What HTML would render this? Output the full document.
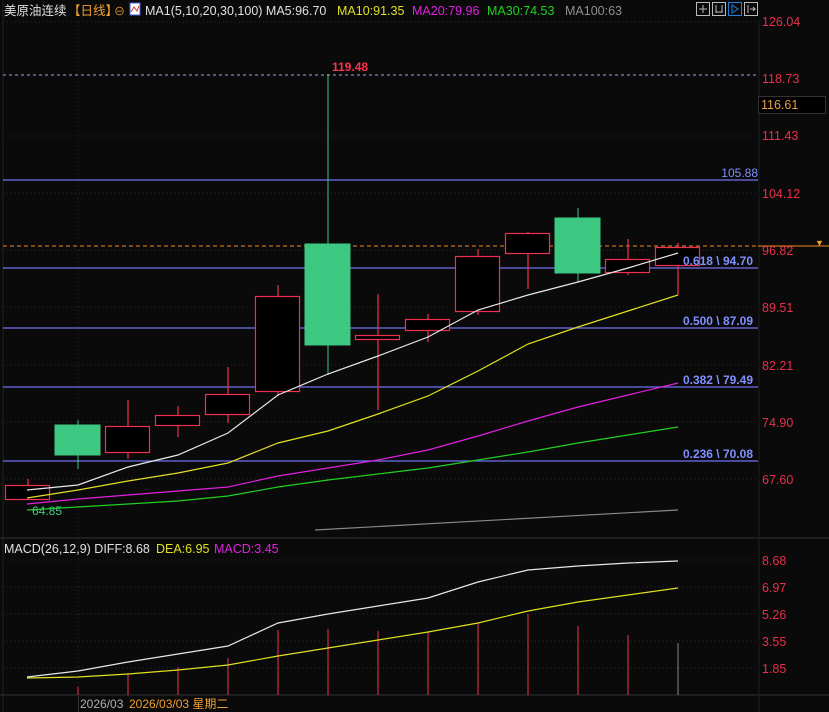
<!DOCTYPE html><html><head><meta charset="utf-8"><style>
body{margin:0;background:#0a0a0a;width:829px;height:712px;overflow:hidden;font-family:"Liberation Sans","Noto Sans CJK SC",sans-serif}
svg{display:block}
</style></head><body>
<svg width="829" height="712" xmlns="http://www.w3.org/2000/svg" font-family="Liberation Sans, Noto Sans CJK SC, sans-serif">
<rect width="829" height="712" fill="#0a0a0a"/>
<g stroke="#2a2a2a" stroke-dasharray="1,3">
<line x1="3" y1="22" x2="758" y2="22"/><line x1="3" y1="136" x2="758" y2="136"/><line x1="3" y1="193" x2="758" y2="193"/><line x1="3" y1="250" x2="758" y2="250"/><line x1="3" y1="307" x2="758" y2="307"/><line x1="3" y1="365" x2="758" y2="365"/><line x1="3" y1="422" x2="758" y2="422"/><line x1="3" y1="479" x2="758" y2="479"/>
<line x1="3" y1="560" x2="758" y2="560"/><line x1="3" y1="587" x2="758" y2="587"/><line x1="3" y1="614" x2="758" y2="614"/><line x1="3" y1="641" x2="758" y2="641"/><line x1="3" y1="668" x2="758" y2="668"/>
<line x1="78" y1="22" x2="78" y2="695"/>
</g>
<line x1="3" y1="0" x2="3" y2="712" stroke="#222"/>
<line x1="0" y1="538" x2="829" y2="538" stroke="#333"/>
<line x1="0" y1="695" x2="829" y2="695" stroke="#333"/>
<line x1="759" y1="20" x2="759" y2="712" stroke="#1e1e1e"/>
<g stroke="#7070f0" stroke-width="1.2">
<line x1="3" y1="180" x2="758" y2="180"/><line x1="3" y1="268" x2="758" y2="268"/><line x1="3" y1="328" x2="758" y2="328"/><line x1="3" y1="387" x2="758" y2="387"/><line x1="3" y1="461" x2="758" y2="461"/>
</g>
<line x1="3" y1="75" x2="758" y2="75" stroke="#a0a0e0" stroke-dasharray="3,3"/>
<line x1="3" y1="246" x2="758" y2="246" stroke="#f08a20" stroke-dasharray="4,3"/>
<line x1="758" y1="246" x2="829" y2="246" stroke="#f08a20"/>
<text x="815" y="246" fill="#f0a020" font-size="9">▼</text>
<g stroke="#f03050" stroke-width="1.2" fill="#000">
<line x1="28" y1="479" x2="28" y2="485"/><rect x="5.5" y="485.5" width="44" height="14"/>
<line x1="128" y1="400" x2="128" y2="459"/><rect x="105.5" y="426.5" width="44" height="26"/>
<line x1="178" y1="406" x2="178" y2="437"/><rect x="155.5" y="415.5" width="44" height="10"/>
<line x1="228" y1="367" x2="228" y2="423"/><rect x="205.5" y="394.5" width="44" height="20"/>
<line x1="278" y1="285" x2="278" y2="396"/><rect x="255.5" y="296.5" width="44" height="95"/>
<line x1="378" y1="294" x2="378" y2="410"/><rect x="355.5" y="335.5" width="44" height="4"/>
<line x1="428" y1="314" x2="428" y2="342"/><rect x="405.5" y="319.5" width="44" height="11"/>
<line x1="478" y1="249" x2="478" y2="315"/><rect x="455.5" y="256.5" width="44" height="55"/>
<line x1="528" y1="232" x2="528" y2="289"/><rect x="505.5" y="233.5" width="44" height="20"/>
<line x1="628" y1="239" x2="628" y2="275"/><rect x="605.5" y="259.5" width="44" height="13"/>
<line x1="678" y1="243" x2="678" y2="295"/><rect x="655.5" y="247.5" width="44" height="18"/>
</g>
<g fill="#3cc880" stroke="#3cc880">
<line x1="78" y1="420" x2="78" y2="469"/><rect x="55" y="425" width="45" height="30"/>
<line x1="328" y1="74" x2="328" y2="375"/><rect x="305" y="244" width="45" height="101"/>
<line x1="578" y1="208" x2="578" y2="282"/><rect x="555" y="218" width="45" height="55"/>
</g>
<g fill="none" stroke-width="1.2">
<polyline stroke="#e8e8e8" points="27,490 78,485 128,467 178,455 228,433 278,395 328,374 378,356 428,337 478,310 528,295 578,282 628,268 678,253"/>
<polyline stroke="#e0e020" points="27,498 78,490 128,481 178,473 228,463 278,443 328,431 378,414 428,396 478,371 528,344 578,327 628,311 678,295"/>
<polyline stroke="#e020e0" points="27,504 78,499 128,495 178,491 228,487 278,476 328,468 378,460 428,450 478,436 528,421 578,407 628,395 678,383"/>
<polyline stroke="#20d020" points="27,510 78,507 128,504 178,501 228,496 278,487 328,480 378,474 428,468 478,460 528,452 578,443 628,435 678,427"/>
<polyline stroke="#888" points="315,530 678,510"/>
</g>
<text x="32" y="515" fill="#3cc880" font-size="12">64.85</text>
<text x="332" y="71" fill="#ff3050" font-size="12" font-weight="bold">119.48</text>
<g fill="#8090ff" font-size="12" font-weight="bold" text-anchor="end">
<text x="753" y="265">0.618 \ 94.70</text><text x="753" y="325">0.500 \ 87.09</text><text x="753" y="384">0.382 \ 79.49</text><text x="753" y="458">0.236 \ 70.08</text>
</g>
<text x="758" y="177" fill="#8090ff" font-size="12" text-anchor="end">105.88</text>
<g fill="#e8304a" font-size="12.5">
<text x="762" y="26">126.04</text><text x="762" y="83">118.73</text><text x="762" y="140">111.43</text><text x="762" y="198">104.12</text><text x="762" y="255">96.82</text><text x="762" y="312">89.51</text><text x="762" y="370">82.21</text><text x="762" y="427">74.90</text><text x="762" y="484">67.60</text>
<text x="762" y="565">8.68</text><text x="762" y="592">6.97</text><text x="762" y="619">5.26</text><text x="762" y="646">3.55</text><text x="762" y="673">1.85</text>
</g>
<rect x="758.5" y="96.5" width="67" height="17" fill="#000" stroke="#333"/>
<text x="761" y="109" fill="#e8a040" font-size="12.5">116.61</text>
<text x="4" y="15" font-size="12.5" fill="#e0e0e0">美原油连续</text>
<text x="68" y="15" font-size="12.5" fill="#f0a030">【日线】</text>
<text x="114" y="15" font-size="11" fill="#f0a030">⊖</text>
<rect x="130" y="3" width="10" height="12" fill="#fff" stroke="#4060e0"/>
<polyline points="131,12 134,7 137,11 139,6" fill="none" stroke="#e03030"/>
<text x="145" y="15" font-size="12.5" fill="#e0e0e0">MA1(5,10,20,30,100) MA5:96.70</text>
<text x="337" y="15" font-size="12.5" fill="#e0e020">MA10:91.35</text>
<text x="412" y="15" font-size="12.5" fill="#e020e0">MA20:79.96</text>
<text x="487" y="15" font-size="12.5" fill="#20d020">MA30:74.53</text>
<text x="565" y="15" font-size="12.5" fill="#909090">MA100:63</text>
<g fill="none" stroke="#bbb">
<rect x="696.5" y="2.5" width="13" height="13"/><rect x="712.5" y="2.5" width="13" height="13"/><rect x="728.5" y="2.5" width="13" height="13" stroke="#2080e0"/><rect x="744.5" y="2.5" width="13" height="13"/>
<path d="M703 5v8M699 9h8"/><path d="M716 5v8M722 5v8M716 12h6"/><path d="M732 5v8l6-4z" stroke="#2080e0"/><path d="M748 5v8M750 9h5l-2-2M755 9l-2 2"/>
</g>
<text x="4" y="553" font-size="12.5" fill="#e0e0e0">MACD(26,12,9) DIFF:8.68</text>
<text x="156" y="553" font-size="12.5" fill="#e0e020">DEA:6.95</text>
<text x="214" y="553" font-size="12.5" fill="#e020e0">MACD:3.45</text>
<g stroke="#f03050">
<line x1="78" y1="687" x2="78" y2="695"/><line x1="128" y1="674" x2="128" y2="695"/><line x1="178" y1="667" x2="178" y2="695"/><line x1="228" y1="658" x2="228" y2="695"/><line x1="278" y1="630" x2="278" y2="695"/><line x1="328" y1="629" x2="328" y2="695"/><line x1="378" y1="631" x2="378" y2="695"/><line x1="428" y1="632" x2="428" y2="695"/><line x1="478" y1="623" x2="478" y2="695"/><line x1="528" y1="614" x2="528" y2="695"/><line x1="578" y1="626" x2="578" y2="695"/><line x1="628" y1="635" x2="628" y2="695"/>
</g>
<line x1="678" y1="643" x2="678" y2="695" stroke="#888"/>
<g fill="none" stroke-width="1.2">
<polyline stroke="#e8e8e8" points="27,677 78,671 128,662 178,654 228,646 278,623 328,614 378,606 428,598 478,582 528,570 578,566 628,563 678,561"/>
<polyline stroke="#e0e020" points="27,678 78,677 128,674 178,670 228,665 278,656 328,648 378,640 428,632 478,623 528,611 578,602 628,595 678,588"/>
</g>
<rect x="78" y="696" width="1" height="16" fill="#333"/>
<text x="80" y="708" font-size="12" fill="#b0b0b0">2026/03</text>
<text x="129" y="708" font-size="12" fill="#f0a030">2026/03/03 星期二</text>
</svg>
</body></html>
